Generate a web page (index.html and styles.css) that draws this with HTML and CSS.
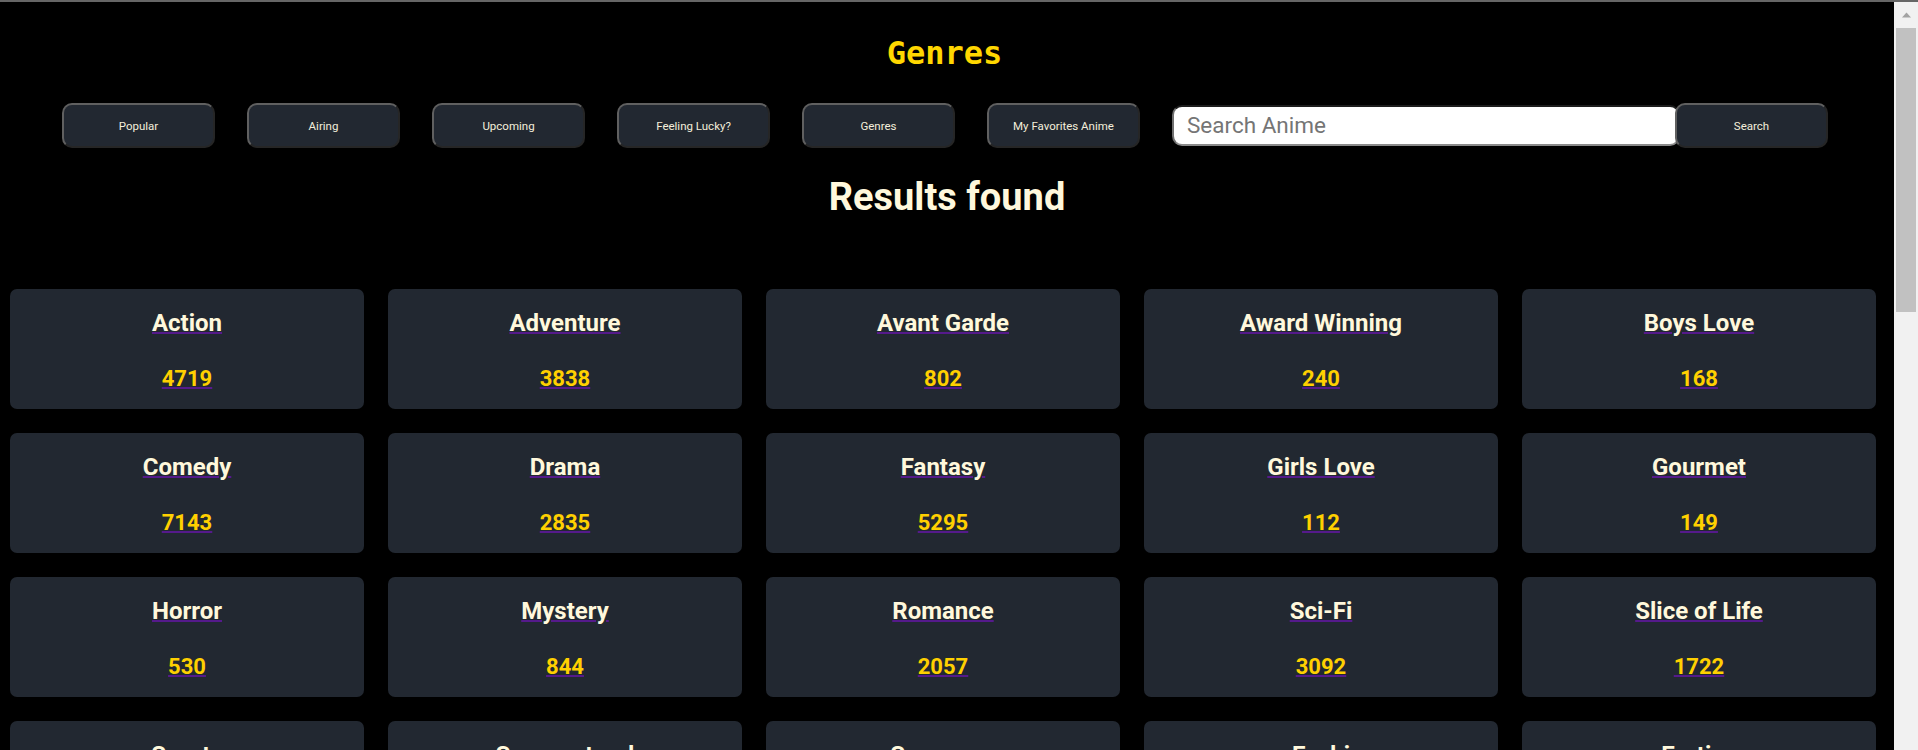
FILE: index.html
```html
<!DOCTYPE html>
<html lang="en">
<head>
<meta charset="utf-8">
<title>Genres</title>
<link rel="stylesheet" href="styles.css">
</head>
<body>
<div class="topline"></div>
<div class="window">
  <main class="page">
    <h1 class="title">Genres</h1>
    <nav class="nav">
      <button class="btn">Popular</button>
      <button class="btn">Airing</button>
      <button class="btn">Upcoming</button>
      <button class="btn">Feeling Lucky?</button>
      <button class="btn">Genres</button>
      <button class="btn">My Favorites Anime</button>
      <input class="search" type="text" placeholder="Search Anime">
      <button class="btn btn-search">Search</button>
    </nav>
    <h2 class="results">Results found</h2>
    <section class="grid">
      <a class="card" href="#"><span class="name">Action</span><span class="count">4719</span></a>
      <a class="card" href="#"><span class="name">Adventure</span><span class="count">3838</span></a>
      <a class="card" href="#"><span class="name">Avant Garde</span><span class="count">802</span></a>
      <a class="card" href="#"><span class="name">Award Winning</span><span class="count">240</span></a>
      <a class="card" href="#"><span class="name">Boys Love</span><span class="count">168</span></a>
      <a class="card" href="#"><span class="name">Comedy</span><span class="count">7143</span></a>
      <a class="card" href="#"><span class="name">Drama</span><span class="count">2835</span></a>
      <a class="card" href="#"><span class="name">Fantasy</span><span class="count">5295</span></a>
      <a class="card" href="#"><span class="name">Girls Love</span><span class="count">112</span></a>
      <a class="card" href="#"><span class="name">Gourmet</span><span class="count">149</span></a>
      <a class="card" href="#"><span class="name">Horror</span><span class="count">530</span></a>
      <a class="card" href="#"><span class="name">Mystery</span><span class="count">844</span></a>
      <a class="card" href="#"><span class="name">Romance</span><span class="count">2057</span></a>
      <a class="card" href="#"><span class="name">Sci-Fi</span><span class="count">3092</span></a>
      <a class="card" href="#"><span class="name">Slice of Life</span><span class="count">1722</span></a>
      <a class="card" href="#"><span class="name">Sports</span><span class="count">786</span></a>
      <a class="card" href="#"><span class="name">Supernatural</span><span class="count">1600</span></a>
      <a class="card" href="#"><span class="name">Suspense</span><span class="count">423</span></a>
      <a class="card" href="#"><span class="name">Ecchi</span><span class="count">816</span></a>
      <a class="card" href="#"><span class="name">Erotica</span><span class="count">87</span></a>
    </section>
  </main>
  <div class="scrollbar">
    <div class="sb-arrow">
      <svg width="9" height="6" viewBox="0 0 9 6"><polygon points="0,5.5 4.5,0.5 9,5.5" fill="#a3a3a3"/></svg>
    </div>
    <div class="sb-thumb"></div>
  </div>
</div>
</body>
</html>
```

FILE: styles.css
```css
html, body {
  margin: 0;
  padding: 0;
  height: 100%;
  overflow: hidden;
  background: #000;
}

body {
  font-family: Roboto, "Noto Sans", sans-serif;
}

.topline {
  height: 2px;
  background: #666;
}

.window {
  display: flex;
  height: 748px;
}

.page {
  flex: 1;
  min-width: 0;
  overflow: hidden;
}

.title {
  margin: 33px 0 0;
  padding-right: 5px;
  text-align: center;
  font-family: "DejaVu Sans Mono", monospace;
  font-weight: 700;
  font-size: 32px;
  line-height: 36px;
  color: #ffd700;
}

.nav {
  display: flex;
  align-items: center;
  gap: 32px;
  height: 44px;
  margin-top: 32px;
  padding-left: 62px;
}

.btn {
  flex: none;
  width: 153px;
  height: 45px;
  box-sizing: border-box;
  padding: 1px 0 0;
  background: #222831;
  color: #f3eedb;
  font-family: Roboto, "Noto Sans", sans-serif;
  font-size: 11.5px;
  font-weight: 400;
  border: 2px solid;
  border-color: #606060 #262626 #262626 #606060;
  border-radius: 10px;
  cursor: pointer;
}

.search {
  flex: none;
  width: 508px;
  height: 41px;
  box-sizing: border-box;
  padding: 0 13px;
  background: #fff;
  border: 2px solid;
  border-color: #1c1c1c #707070 #8a8a8a #707070;
  border-radius: 10px;
  font-family: Roboto, "Noto Sans", sans-serif;
  font-size: 22.5px;
  color: #222;
  outline: none;
}

.search::placeholder {
  color: #757575;
}

.btn-search {
  margin-left: -37px;
}

.results {
  margin: 28px 0 0;
  text-align: center;
  font-family: Roboto, "Noto Sans", sans-serif;
  font-weight: 700;
  font-size: 38px;
  line-height: 44px;
  color: #fff8dc;
}

.grid {
  display: grid;
  grid-template-columns: repeat(5, 354px);
  gap: 24px;
  padding-left: 10px;
  margin-top: 70px;
}

.card {
  display: block;
  height: 120px;
  box-sizing: border-box;
  padding-top: 20px;
  background: #222831;
  border-radius: 7px;
  text-align: center;
  color: #551a8b;
  text-decoration: underline;
  text-decoration-thickness: 2px;
}

.name {
  display: block;
  font-weight: 700;
  font-size: 24px;
  line-height: 29px;
  color: #fff8dc;
}

.count {
  display: block;
  margin-top: 26px;
  font-weight: 700;
  font-size: 22px;
  line-height: 29px;
  color: #ffd000;
}

.scrollbar {
  flex: none;
  width: 24px;
  background: #f1f1f1;
  display: flex;
  flex-direction: column;
}

.sb-arrow {
  height: 26px;
  display: flex;
  align-items: center;
  justify-content: center;
}

.sb-thumb {
  height: 284px;
  margin: 0 2px;
  background: #c1c1c1;
}
```
